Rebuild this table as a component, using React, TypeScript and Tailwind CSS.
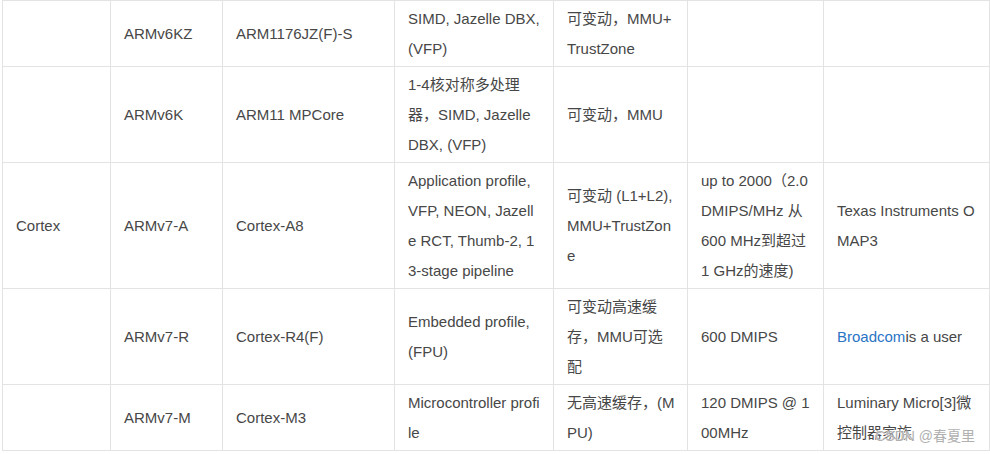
import type { ReactNode } from "react";

type Cell = ReactNode[];

const rows: Cell[][] = [
  [
    [],
    ["ARMv6KZ"],
    ["ARM1176JZ(F)-S"],
    ["SIMD, Jazelle DBX,", "(VFP)"],
    ["可变动，MMU+", "TrustZone"],
    [],
    [],
  ],
  [
    [],
    ["ARMv6K"],
    ["ARM11 MPCore"],
    ["1-4核对称多处理", "器，SIMD, Jazelle", "DBX, (VFP)"],
    ["可变动，MMU"],
    [],
    [],
  ],
  [
    ["Cortex"],
    ["ARMv7-A"],
    ["Cortex-A8"],
    ["Application profile,", "VFP, NEON, Jazell", "e RCT, Thumb-2, 1", "3-stage pipeline"],
    ["可变动 (L1+L2),", "MMU+TrustZon", "e"],
    ["up to 2000（2.0", "DMIPS/MHz 从", "600 MHz到超过", "1 GHz的速度)"],
    ["Texas Instruments O", "MAP3"],
  ],
  [
    [],
    ["ARMv7-R"],
    ["Cortex-R4(F)"],
    ["Embedded profile,", "(FPU)"],
    ["可变动高速缓", "存，MMU可选", "配"],
    ["600 DMIPS"],
    [
      <>
        <a className="text-[#2a74c6] no-underline">Broadcom</a>is a user
      </>,
    ],
  ],
  [
    [],
    ["ARMv7-M"],
    ["Cortex-M3"],
    ["Microcontroller profi", "le"],
    ["无高速缓存，(M", "PU)"],
    ["120 DMIPS @ 1", "00MHz"],
    ["Luminary Micro[3]微", "控制器家族"],
  ],
];

export default function App() {
  return (
    <div className="relative w-[990px] h-[454px] overflow-hidden bg-white font-['Liberation_Sans','Noto_Sans_CJK_SC',sans-serif] text-[15px] leading-[30px] text-[#474747]">
      <div className="ml-[2px] inline-grid grid-cols-[107px_111px_171px_158px_133px_135px_165px] gap-px p-px bg-[#e3e3e3]">
        {rows.map((row, r) =>
          row.map((cell, c) => (
            <div
              key={`${r}-${c}`}
              className="flex flex-col justify-center bg-white pl-[13px] pr-[11px] pt-[3px] pb-[2px] min-h-[65px]"
            >
              {cell.map((line, i) => (
                <div key={i} className="whitespace-nowrap">
                  {line}
                </div>
              ))}
            </div>
          ))
        )}
      </div>
      {/* watermark */}
      <div className="absolute right-[15px] bottom-[8px] text-[14px] leading-[20px] text-[#b0b0b0] [text-shadow:0_0_2px_#fff,0_0_2px_#fff]">
        CSDN @春夏里
      </div>
    </div>
  );
}
